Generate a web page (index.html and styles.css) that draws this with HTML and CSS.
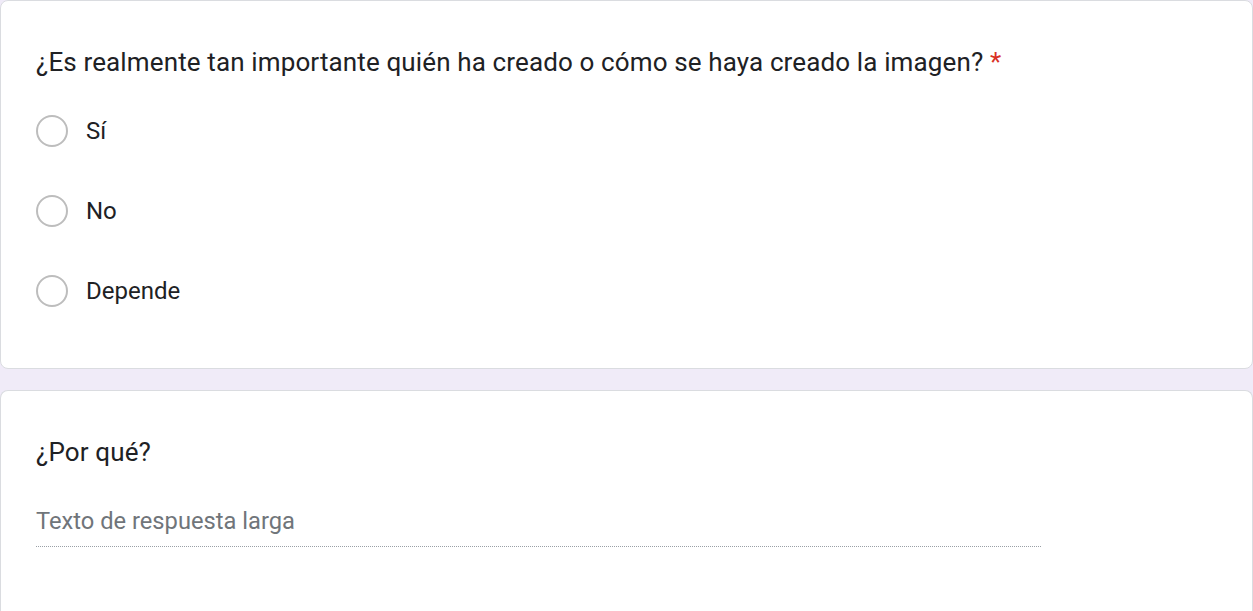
FILE: index.html
```html
<!DOCTYPE html>
<html lang="es">
<head>
<meta charset="utf-8">
<link rel="stylesheet" href="styles.css">
</head>
<body>
  <div class="card card-first">
    <div class="question">¿Es realmente tan importante quién ha creado o cómo se haya creado la imagen? <span class="req">*</span></div>
    <div class="options">
      <label class="option"><span class="radio"></span><span class="opt-text">Sí</span></label>
      <label class="option"><span class="radio"></span><span class="opt-text">No</span></label>
      <label class="option"><span class="radio"></span><span class="opt-text">Depende</span></label>
    </div>
  </div>
  <div class="card card-second">
    <div class="question">¿Por qué?</div>
    <div class="answer">
      <div class="placeholder">Texto de respuesta larga</div>
    </div>
  </div>
</body>
</html>
```
FILE: styles.css
```css
html, body {
  margin: 0;
  padding: 0;
}
body {
  background: #f0ebf8;
  font-family: Roboto, "Noto Sans", Arial, sans-serif;
  color: #202124;
  overflow: hidden;
  height: 611px;
}
.card {
  background: #fff;
  border: 1px solid #dadce0;
  border-radius: 8px;
  box-sizing: border-box;
  width: 1253px;
}
.card-first {
  height: 369px;
  padding: 46px 35px 0 35px;
}
.card-second {
  margin-top: 21px;
  height: 221px;
  padding: 46px 35px 0 35px;
  border-bottom: 0;
  border-bottom-left-radius: 0;
  border-bottom-right-radius: 0;
}
.question {
  font-size: 26px;
  line-height: 30px;
  letter-spacing: 0.13px;
}
.req {
  color: #d93025;
}
.options {
  margin-top: 34px;
  display: flex;
  flex-direction: column;
  gap: 40px;
}
.option {
  display: flex;
  align-items: center;
  height: 40px;
  gap: 18px;
}
.radio {
  width: 32px;
  height: 32px;
  border: 2px solid #bdbdbd;
  border-radius: 50%;
  box-sizing: border-box;
  flex: none;
}
.opt-text {
  font-size: 24px;
}
.answer {
  margin-top: 41px;
  width: 1005px;
  border-bottom: 1px dotted #9aa0a6;
  padding-bottom: 12px;
}
.placeholder {
  font-size: 23.7px;
  color: #70757a;
  line-height: 26px;
}
```
